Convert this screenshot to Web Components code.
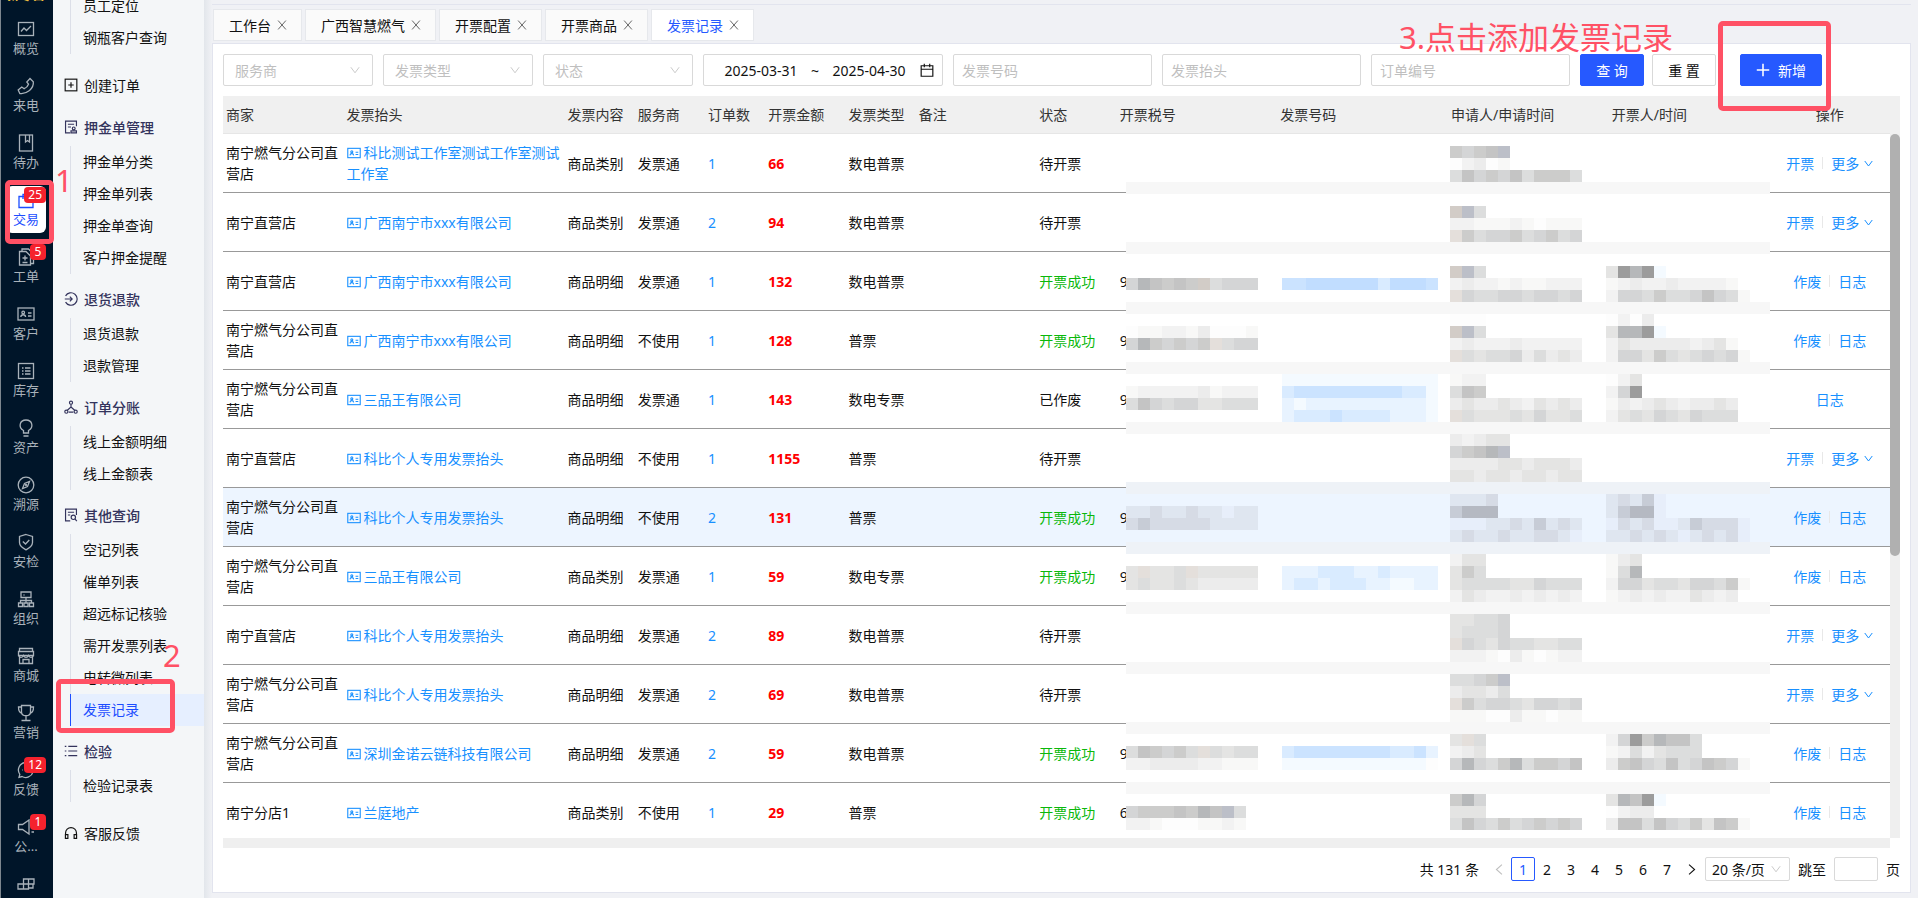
<!DOCTYPE html>
<html lang="zh-CN">
<head>
<meta charset="utf-8">
<title>发票记录</title>
<style>
  html, body { height: 100%; }
  body {
    margin: 0;
    font: 14px/21px "Noto Sans", "Noto Sans CJK SC", sans-serif;
    color: #111;
    background: #f0f1f5;
    overflow: hidden;
  }
</style>
</head>
<body>
<app-shell>
  <side-rail slot="rail"></side-rail>
  <side-menu slot="menu"></side-menu>
  <tab-bar></tab-bar>
  <page-panel>
    <filter-bar></filter-bar>
    <invoice-table></invoice-table>
    <page-pager></page-pager>
  </page-panel>
</app-shell>
<guide-mark style="left:5px;top:180px;width:49px;height:64px"></guide-mark>
<guide-mark style="left:56px;top:679px;width:119px;height:54px"></guide-mark>
<guide-mark style="left:1718px;top:21px;width:113px;height:90px"></guide-mark>
<guide-text style="left:55px;top:157px">1</guide-text>
<guide-text style="left:163px;top:632px">2</guide-text>
<guide-text style="left:1399px;top:14px">3.点击添加发票记录</guide-text>

<script>
const icons = {
  chart: '<rect x="1.5" y="2.5" width="15" height="13"/><path d="M4 11.5l3-3.5 2.5 2.5L14 6"/>',
  phone: '<path d="M13 1.5l3.3 3.3c.4 3.500-1.300 6.500-3.800 8.700-2.800 2.200-6.500 3.600-9.700 3L1.200 13l3.600-3 2.400 1.700c2-.8 3.500-2.400 4.300-4.500L9.800 5z"/>',
  book: '<rect x="2.500" y="1" width="13" height="16"/><path d="M8.500 1v7l2-1.500 2 1.500V1"/>',
  trade: '<path d="M2 5.500h14v11H2z"/><path d="M6 8V3.500h6V8"/>',
  order: '<path d="M5 3V1h6.500l5 5v9.500H14"/><path d="M2.500 3.500H9l4.500 4.500v9h-11z"/><path d="M8 7.500v5M5.500 10h5M5.500 14.500h5"/>',
  idcard: '<rect x="1" y="3" width="16" height="12"/><circle cx="6.200" cy="7.500" r="1.300"/><path d="M3.800 12c.3-3 4.500-3 4.800 0M11 8h3.500M11 11h3.500"/>',
  list: '<rect x="1.500" y="1.500" width="15" height="15"/><path d="M5 6h1.500M5 9h1.500M5 12h1.500M8 6h5.500M8 9h5.500M8 12h5.500"/>',
  bulb: '<path d="M6.500 14v-2.500C1 8.500 2.500 1 9 1s8 7.500 2.500 10.500V14zM6.500 17h5"/>',
  compass: '<circle cx="9" cy="9" r="7.800"/><path d="M12.500 5.500l-2 5-5 2 2-5z"/><circle cx="9" cy="9" r=".5"/>',
  shield: '<path d="M9 1.500l6.500 2v6c0 3.500-3 5.500-6.500 7.300C5.500 15 2.500 13 2.500 9.500v-6z"/><path d="M5.800 8.500L8.500 11l3.800-4"/>',
  org: '<path d="M4 2h10v5.500H4zM9 7.500V10M3.500 13v-2.500h11V13M9 10v3M1.500 13h4v3.500h-4zM7 13h4v3.500H7zM12.500 13h4v3.500h-4zM6.500 5h1"/>',
  shop: '<path d="M2.500 1.500h13v3h-13zM1.500 4.500h15v4h-15zM2.500 8.500v8h13v-8M6 16.500v-4h6v4"/><path d="M1.500 8.500c1.500 2.500 3.500 2.500 5 0 1 2.500 4 2.500 5 0 1.500 2.500 3.500 2.500 5 0"/>',
  cup: '<path d="M4.500 1.500h9V8c0 5-9 5-9 0zM4.500 3h-3c0 3.500.500 5.500 3 6M13.500 3h3c0 3.500-.5 5.500-3 6M9 12v4.500M4.500 16.500h9"/>',
  chat: '<path d="M9 1.500a7.500 7.500 0 1 1-4 14l-3 .8.800-3A7.500 7.500 0 0 1 9 1.500z"/><path d="M5.500 9h.5M9 9h.5M12.500 9h.5"/>',
  horn: '<path d="M1.500 6.500h4L12 2v14l-6.500-4.500h-4zM14.500 14h2.500"/>',
  blocks: '<path d="M6.500 4h10.500v5H6.500zM1 9h10.500v5H1zM11.500 4v5h4.500v4h-4.500M6.500 9v5"/>',
  plusbox: '<rect x="1.500" y="1.500" width="15" height="15"/><path d="M9 5.500v7M5.500 9h7"/>',
  deposit: '<path d="M8 16.500H2v-15h14V8M5 5.500h8M5 9h4"/><circle cx="12.500" cy="10.800" r="1.800"/><path d="M9 16.500v-2.500h7v2.500z"/>',
  refund: '<path d="M2 5a8 8 0 1 1 0 8M1 9h9M7.500 6l3 3-3 3"/>',
  share: '<circle cx="9" cy="3.500" r="2"/><circle cx="3" cy="15" r="2"/><circle cx="15" cy="15" r="2"/><path d="M9 5.500V9l-5 4.500M9 9l5 4.500M6 15.500h6"/>',
  query: '<path d="M8 16.500H2v-15h14V9M5 5.500h8M5 9h3"/><circle cx="12" cy="12" r="2.800"/><path d="M14 14l2.500 3"/>',
  lines: '<path d="M1 3h2M1 9h2M1 15h2M5.500 3H17M5.500 9H17M5.500 15H17"/>',
  headset: '<path d="M2 11V9a7 7 0 0 1 14 0v2M1.800 11H5v5H1.800zM13 11h3.200v5H13z"/>',
  down: '<path d="M1.500 4L9 14l7.500-10"/>',
  left: '<path d="M13 1L4 9l9 8"/>',
  right: '<path d="M5 1l9 8-9 8"/>',
  close: '<path d="M2 1l14 16M16 1L2 17"/>',
  plus: '<path d="M9 1v16M1 9h16"/>',
  calendar: '<path d="M1.500 3.500h15v13.500h-15zM1.500 8h15M5.500 1v4.500M12.500 1v4.500"/>'
}

// every element renders once into an open shadow root
class BaseElement extends HTMLElement {
  constructor() {
    super()
    this.attachShadow({ mode: 'open' })
  }

  connectedCallback() {
    this.shadowRoot.innerHTML = `<style>* { box-sizing: border-box } ${this.styles()}</style>${this.render()}`
  }

  styles() {
    return ''
  }

  render() {
    return '<slot></slot>'
  }
}

class UiIcon extends BaseElement {
  styles() {
    return `
      :host { display: inline-block; width: 14px; height: 14px; flex: none; }
      svg { display: block; width: 100%; height: 100%; fill: none; stroke: currentColor; stroke-width: var(--stroke, 1.5); overflow: visible; }
    `
  }

  render() {
    return `<svg viewBox="0 0 18 18" aria-hidden="true">${icons[this.getAttribute('name')]}</svg>`
  }
}
customElements.define('ui-icon', UiIcon)

class AppShell extends BaseElement {
  styles() {
    return `
      :host { display: flex; height: 100vh; }
      main {
        flex: 1; min-width: 0; display: flex; flex-direction: column;
        padding: 4px 7px 5px 8px;
        background: linear-gradient(to right, #e2e6eb, #f0f1f5 8px);
      }
    `
  }

  render() {
    return '<slot name="rail"></slot><slot name="menu"></slot><main><slot></slot></main>'
  }
}
customElements.define('app-shell', AppShell)

const railItems = [
  ['chart', '概览'], ['phone', '来电'], ['book', '待办'], ['trade', '交易', 25],
  ['order', '工单', 5], ['idcard', '客户'], ['list', '库存'], ['bulb', '资产'],
  ['compass', '溯源'], ['shield', '安检'], ['org', '组织'], ['shop', '商城'],
  ['cup', '营销'], ['chat', '反馈', 12], ['horn', '公...', 1], ['blocks', '']
]

class SideRail extends BaseElement {
  styles() {
    return `
      :host { display: block; flex: none; width: 53px; overflow: hidden; background: #001529; border-left: 1px solid #7d868e; box-sizing: border-box; }
      .brand { height: 29px; margin-top: -14px; line-height: 16px; font-size: 13px; font-weight: bold; color: #f0c040; padding-left: 5px; white-space: nowrap; }
      a {
        position: relative; display: flex; flex-direction: column; align-items: center;
        width: 40px; height: 47px; margin: 0 0 10px 5px; padding-top: 5px;
        font-size: 13px; line-height: 20px; color: #a9b2ba; text-decoration: none;
      }
      a.active { background: #fff; border-radius: 6px; color: #1c4dff; }
      ui-icon { width: 18px; height: 18px; --stroke: 1.3; }
      b {
        position: absolute; top: 1px; right: 0; min-width: 16px; height: 16px; padding: 0 4px;
        border-radius: 4px; background: #f5222d; color: #fff; font-size: 12px; font-weight: normal; line-height: 15px; text-align: center;
      }
    `
  }

  render() {
    return '<div class="brand">新零售</div>' + railItems.map(([icon, label, count]) => `
      <a href="#" class="${label === '交易' ? 'active' : ''}"><ui-icon name="${icon}"></ui-icon>${label ? `<span>${label}</span>` : ''}${count ? `<b>${count}</b>` : ''}</a>
    `).join('')
  }
}
customElements.define('side-rail', SideRail)

const menu = [
  { items: ['员工定位', '钢瓶客户查询'] },
  { icon: 'plusbox', title: '创建订单' },
  { icon: 'deposit', title: '押金单管理', items: ['押金单分类', '押金单列表', '押金单查询', '客户押金提醒'] },
  { icon: 'refund', title: '退货退款', items: ['退货退款', '退款管理'] },
  { icon: 'share', title: '订单分账', items: ['线上金额明细', '线上金额表'] },
  { icon: 'query', title: '其他查询', items: ['空记列表', '催单列表', '超远标记核验', '需开发票列表', '电转微列表', '发票记录'] },
  { icon: 'lines', title: '检验', items: ['检验记录表'] },
  { icon: 'headset', title: '客服反馈' }
]

class SideMenu extends BaseElement {
  styles() {
    return `
      :host { display: block; flex: none; width: 151px; overflow: hidden; background: #f4f6f8; }
      nav { margin-top: -10px; }
      .head { display: flex; align-items: center; gap: 6px; height: 36px; margin-top: 8px; padding: 0 0 2px 11px; font-weight: 500; color: #33335c; }
      .single { height: 32px; margin-top: 16px; font-weight: normal; color: #111; text-decoration: none; }
      ul { list-style: none; margin: 0 0 0 17px; padding: 0; }
      li a { display: block; height: 32px; line-height: 32px; padding-left: 12px; border-left: 1px solid #dcdfe8; color: #111; text-decoration: none; }
      li a.active { background: #e6efff; border-color: #1c4dff; color: #1c4dff; }
    `
  }

  render() {
    const head = group => `<ui-icon name="${group.icon}"></ui-icon>${group.title}`
    return `<nav>${menu.map(group => {
      if (!group.items) return `<a href="#" class="head single">${head(group)}</a>`
      return `
        ${group.title ? `<div class="head">${head(group)}</div>` : ''}
        <ul>${group.items.map(item => `<li><a href="#" class="${item === '发票记录' ? 'active' : ''}">${item}</a></li>`).join('')}</ul>
      `
    }).join('')}</nav>`
  }
}
customElements.define('side-menu', SideMenu)

class TabBar extends BaseElement {
  styles() {
    return `
      :host { display: flex; flex: none; gap: 3px; height: 39px; padding: 4px 0 2px 1px; border-top: 1px solid #e2e4ee; box-sizing: border-box; }
      .tab { display: flex; align-items: center; gap: 6px; height: 32px; padding: 0 14px 0 15px; border: 1px solid #e6e8ec; background: #fafafa; }
      .tab.active { background: #fff; color: #2659ff; }
      a { color: inherit; text-decoration: none; }
      button { width: 10px; height: 10px; padding: 0; border: 0; background: none; color: #666; }
      ui-icon { width: 10px; height: 10px; display: block; --stroke: 1.8; }
    `
  }

  render() {
    return ['工作台', '广西智慧燃气', '开票配置', '开票商品', '发票记录'].map((name, i) => `
      <div class="tab ${i === 4 ? 'active' : ''}"><a href="#">${name}</a><button aria-label="关闭"><ui-icon name="close"></ui-icon></button></div>
    `).join('')
  }
}
customElements.define('tab-bar', TabBar)

class PagePanel extends BaseElement {
  styles() {
    return ':host { display: flex; flex-direction: column; flex: 1; min-height: 0; background: #fff; border: 1px solid #e2e4ee; padding: 10px 10px 0; box-sizing: border-box; }'
  }
}
customElements.define('page-panel', PagePanel)

// native select with its own chevron
class SelectBox extends BaseElement {
  styles() {
    return `
      :host { display: grid; align-items: center; width: 150px; height: 32px; color: #bfbfbf; }
      select, ui-icon { grid-area: 1 / 1; }
      select { appearance: none; width: 100%; height: 100%; padding: 0 0 0 var(--pad, 11px); border: 1px solid #d9d9d9; border-radius: 2px; background: #fff; font: inherit; color: inherit; }
      ui-icon { width: 10px; height: 10px; justify-self: end; margin-right: var(--arrow, 13px); color: #bfbfbf; pointer-events: none; }
    `
  }

  render() {
    const label = this.getAttribute('label')
    return `<select aria-label="${label}"><option>${label}</option></select><ui-icon name="down"></ui-icon>`
  }
}
customElements.define('select-box', SelectBox)

class FilterBar extends BaseElement {
  styles() {
    return `
      :host { display: flex; flex: none; gap: 10px; height: 32px; margin-bottom: 10px; }
      input { font: inherit; color: inherit; }
      input::placeholder { color: #bfbfbf; }
      .text { width: 199px; padding: 0 8px; border: 1px solid #d9d9d9; border-radius: 2px; }
      .range { display: flex; align-items: center; width: 240px; padding-left: 11px; border: 1px solid #d9d9d9; border-radius: 2px; }
      .range input { width: 92px; padding: 0; border: 0; text-align: center; }
      .range span { width: 16px; text-align: center; }
      .range ui-icon { margin-left: 5px; }
      .buttons { display: flex; gap: 8px; }
      button { height: 32px; min-width: 64px; padding: 0 15px; border: 1px solid #d9d9d9; border-radius: 2px; background: #fff; font: inherit; color: inherit; white-space: nowrap; }
      button.primary { background: #2659ff; border-color: #2659ff; color: #fff; }
      .add { display: flex; align-items: center; gap: 8px; margin-left: 14px; }
      .add ui-icon { --stroke: 2; }
    `
  }

  render() {
    return `
      <select-box label="服务商"></select-box>
      <select-box label="发票类型"></select-box>
      <select-box label="状态"></select-box>
      <div class="range">
        <input aria-label="开始日期" value="2025-03-31"><span>~</span><input aria-label="结束日期" value="2025-04-30">
        <ui-icon name="calendar"></ui-icon>
      </div>
      <input class="text" aria-label="发票号码" placeholder="发票号码">
      <input class="text" aria-label="发票抬头" placeholder="发票抬头">
      <input class="text" aria-label="订单编号" placeholder="订单编号">
      <div class="buttons"><button class="primary">查 询</button><button>重 置</button></div>
      <button class="primary add"><ui-icon name="plus"></ui-icon>新增</button>
    `
  }
}
customElements.define('filter-bar', FilterBar)

// 12px cells that cover personal data, five lines to a band; the fifth is the strip over the row border
const shades = {
  0: '#fdfdfd', 1: '#f8f8f7', 2: '#f2f2f2', 3: '#ececec', 4: '#e4e4e3', 5: '#dcdddd', 6: '#d4d5d6', 7: '#cccccb', 8: '#c4c4c4', 9: '#b6b8ba',
  a: '#9c9c9c', w: '#e4dfdb', v: '#d2ccc7', x: '#bcbfc8', b: '#f4faff', c: '#e8f3ff', d: '#d9ebff', e: '#cbe3ff', f: '#c1ddff',
  H: '#e7eefa', I: '#dfe6f0', J: '#d6dbe5', K: '#c7ccd6', L: '#b5b9c2'
}
const TAX = 0, NUM = 13, ASK = 27, OPEN = 40
const bands = [
  [[ASK, 1, '7678x'], [ASK, 2, '02301'], [ASK, 3, '58676857775']],
  [[ASK, 1, 'vx5'], [ASK, 2, '22111210111'], [ASK, 3, 'w7566756756']],
  [[TAX, 2, '698787v5666'], [NUM, 2, 'eeffffffdfffe'], [ASK, 1, 'vx5'], [OPEN, 1, '4a9ab'],
    [ASK, 2, '23221211222'], [OPEN, 2, '12322322221'], [ASK, 3, 'w6556656656'], [OPEN, 3, '266575568651']],
  [[TAX, 1, '01122130001'], [TAX, 2, '6976767w566'], [ASK, 0, '000'], [ASK, 1, 'vx5'], [OPEN, 0, '0203'], [OPEN, 1, '499ab'],
    [ASK, 2, '23222322222'], [OPEN, 2, '24333332341'], [ASK, 3, 'w5455635343'], [OPEN, 3, '266475456561']],
  [[TAX, 1, '12222231222'], [TAX, 2, '58656644555'], [NUM, 0, 'bbbbbbbbbbbbb'], [NUM, 1, 'deeeeeeeeeddb'], [NUM, 2, 'cbccccccccccb'], [NUM, 3, 'cdddeddddcccb'],
    [ASK, 0, '122'], [ASK, 1, '587'], [ASK, 2, '34334324343'], [ASK, 3, 'w5444546445'], [OPEN, 0, '024'], [OPEN, 1, '26a'], [OPEN, 2, '13234323343'], [OPEN, 3, '24546546555']],
  [[ASK, 0, '32344'], [ASK, 1, '6789x'], [ASK, 2, '33334434443'], [ASK, 3, '44344344344']],
  [[TAX, 1, 'IIJIIJIIHII'], [TAX, 2, 'JKJJJJJIIII'], [ASK, 0, 'IIIJ'], [ASK, 1, 'KLLL'], [ASK, 2, 'HHHIIJIKIJI'], [ASK, 3, 'IJIIJIIJJIH'],
    [OPEN, 0, 'IJIKH'], [OPEN, 1, 'IKLLH'], [OPEN, 2, 'HJIJHHIKJJJH'], [OPEN, 3, 'IIJIJIHIJIJH']],
  [[TAX, 1, '4w445w44444'], [TAX, 2, '45445433333'], [NUM, 1, 'cccdddccdcccc'], [NUM, 2, 'cddcdddccbbcc'],
    [ASK, 0, '244'], [ASK, 1, '475'], [ASK, 2, '45555446555'], [ASK, 3, '24322323232'], [OPEN, 0, '134'], [OPEN, 1, '159'], [OPEN, 2, '266455466571'], [OPEN, 3, '12323224323']],
  [[ASK, 0, '44556'], [ASK, 1, '45556'], [ASK, 2, 'w6546554455'], [ASK, 3, '22210310122']],
  [[ASK, 0, '5567x'], [ASK, 1, '34435'], [ASK, 2, 'w7566546656'], [ASK, 3, '11100311011']],
  [[TAX, 1, '587675w5455'], [TAX, 2, '22333322111'], [NUM, 1, 'deeeeeeeeddec'], [NUM, 2, 'bbbbbbbbbbbb0'],
    [ASK, 0, '4w5'], [ASK, 1, '234'], [ASK, 2, '69657957768'], [OPEN, 0, '26a79885'], [OPEN, 1, '12524555'], [OPEN, 2, '378658568761']],
  [[TAX, 1, '67778798x5'], [TAX, 2, '2210001121'], [ASK, 0, '796'], [ASK, 1, '444'], [ASK, 2, '58657567676'], [OPEN, 0, '498ab'], [OPEN, 1, '0233'], [OPEN, 2, '388586574871']]
]

class MosaicMask extends BaseElement {
  styles() {
    return `
      :host { display: block; background: #fff; }
      svg { display: block; }
    `
  }

  render() {
    const rect = (x, y, w, fill) => `<rect x="${x}" y="${y}" width="${w}" height="12" fill="${fill}"/>`
    let cells = '<rect y="360" width="644" height="48" fill="#edf5ff"/>'
    bands.forEach((band, k) => {
      band.forEach(([col, line, text]) => {
        [...text].forEach((key, i) => { cells += rect((col + i) * 12, k * 60 + line * 12, 12, shades[key]) })
      })
      if (k < 11) cells += rect(0, k * 60 + 48, 644, k === 5 || k === 6 ? '#eef2f7' : '#f7f7f7')
    })
    return `<svg width="644" height="704" shape-rendering="crispEdges" aria-hidden="true">${cells}</svg>`
  }
}
customElements.define('mosaic-mask', MosaicMask)

const columns = [
  ['商家', 120], ['发票抬头', 220], ['发票内容', 70], ['服务商', 70], ['订单数', 60], ['开票金额', 80], ['发票类型', 70],
  ['备注', 120], ['状态', 80], ['开票税号', 160], ['发票号码', 170], ['申请人/申请时间', 160], ['开票人/时间', 160], ['操作', 120]
]

const A = '南宁燃气分公司直营店'
const B = '南宁直营店'
const rows = [
  [A, '科比测试工作室测试工作室测试工作室', '商品类别', '发票通', 1, 66, '数电普票', '待开票', ''],
  [B, '广西南宁市xxx有限公司', '商品类别', '发票通', 2, 94, '数电普票', '待开票', ''],
  [B, '广西南宁市xxx有限公司', '商品明细', '发票通', 1, 132, '数电普票', '开票成功', '9'],
  [A, '广西南宁市xxx有限公司', '商品明细', '不使用', 1, 128, '普票', '开票成功', '9'],
  [A, '三品王有限公司', '商品明细', '发票通', 1, 143, '数电专票', '已作废', '9'],
  [B, '科比个人专用发票抬头', '商品明细', '不使用', 1, 1155, '普票', '待开票', ''],
  [A, '科比个人专用发票抬头', '商品明细', '不使用', 2, 131, '普票', '开票成功', '9'],
  [A, '三品王有限公司', '商品类别', '发票通', 1, 59, '数电专票', '开票成功', '9'],
  [B, '科比个人专用发票抬头', '商品明细', '发票通', 2, 89, '数电普票', '待开票', ''],
  [A, '科比个人专用发票抬头', '商品明细', '发票通', 2, 69, '数电普票', '待开票', ''],
  [A, '深圳金诺云链科技有限公司', '商品明细', '发票通', 2, 59, '数电普票', '开票成功', '9'],
  ['南宁分店1', '兰庭地产', '商品类别', '不使用', 1, 29, '普票', '开票成功', '6']
]

const actions = {
  '待开票': '<a href="#">开票</a><i></i><a href="#">更多<ui-icon name="down"></ui-icon></a>',
  '开票成功': '<a href="#">作废</a><i></i><a href="#">日志</a>',
  '已作废': '<a href="#">日志</a>'
}

class InvoiceTable extends BaseElement {
  styles() {
    return `
      :host { position: relative; display: grid; grid-template-columns: 1fr 10px; grid-template-rows: minmax(0, 1fr) 10px; flex: 1; min-height: 0; }
      .body { overflow: hidden; }
      table { width: 100%; table-layout: fixed; border-collapse: separate; border-spacing: 0; }
      th, td { padding: 0 3px; text-align: left; }
      th { height: 38px; background: #f0f0f0; border-bottom: 1px solid #e6e6e6; font-weight: normal; color: #333; white-space: nowrap; }
      td { height: 59px; border-bottom: 1px solid #999; }
      tr.hover td { background: #edf5ff; }
      th:last-child, td:last-child { text-align: center; }
      a { color: #1890ff; text-decoration: none; }
      .amount { color: #f00; font-weight: bold; }
      .ok { color: #0ab80a; }
      .title ui-icon { margin-right: 3px; vertical-align: -2px; --stroke: 1.4; }
      .ops { display: flex; justify-content: center; align-items: center; }
      .ops a { display: flex; align-items: center; gap: 5px; }
      .ops i { width: 1px; height: 12px; margin: 0 8px; background: #e8e8e8; }
      .ops ui-icon { width: 9px; height: 9px; --stroke: 2; }
      .scroll { padding-top: 38px; background: linear-gradient(#f0f0f0 38px, #efefef 38px); }
      .thumb { height: 60%; border-radius: 5px; background: #b0b0b0; }
      .hscroll { background: #efefef; }
      mosaic-mask { position: absolute; top: 38px; bottom: 10px; right: 130px; overflow: hidden; }
    `
  }

  render() {
    return `
      <div class="body">
        <table>
          <colgroup>${columns.map(([, width]) => `<col style="width:${width}px">`).join('')}</colgroup>
          <thead><tr>${columns.map(([name]) => `<th>${name}</th>`).join('')}</tr></thead>
          <tbody>${rows.map(([shop, title, kind, vendor, count, amount, type, state, tax], i) => `
            <tr class="${i === 6 ? 'hover' : ''}">
              <td>${shop}</td>
              <td class="title"><a href="#"><ui-icon name="idcard"></ui-icon>${title}</a></td>
              <td>${kind}</td><td>${vendor}</td>
              <td><a href="#">${count}</a></td>
              <td class="amount">${amount}</td>
              <td>${type}</td><td></td>
              <td class="${state === '开票成功' ? 'ok' : ''}">${state}</td>
              <td>${tax}</td><td></td><td></td><td></td>
              <td><div class="ops">${actions[state]}</div></td>
            </tr>`).join('')}
          </tbody>
        </table>
      </div>
      <div class="scroll"><div class="thumb"></div></div>
      <div class="hscroll"></div>
      <mosaic-mask></mosaic-mask>
    `
  }
}
customElements.define('invoice-table', InvoiceTable)

class PagePager extends BaseElement {
  styles() {
    return `
      :host { display: flex; flex: none; justify-content: flex-end; align-items: center; height: 44px; padding-bottom: 2px; gap: 8px; box-sizing: border-box; }
      .pages { display: flex; }
      button { display: grid; place-items: center; width: 24px; height: 24px; padding: 0; border: 1px solid transparent; border-radius: 2px; background: none; font: inherit; color: inherit; }
      button.active { border-color: #2659ff; color: #2659ff; }
      button:disabled { color: #bfbfbf; }
      ui-icon { width: 11px; height: 11px; --stroke: 1.8; }
      select-box { width: 85px; height: 24px; margin-left: -6px; color: #111; --pad: 6px; --arrow: 9px; }
      label { display: flex; align-items: center; gap: 8px; }
      input { width: 44px; height: 24px; border: 1px solid #d9d9d9; border-radius: 2px; font: inherit; }
    `
  }

  render() {
    return `
      <span>共 131 条</span>
      <div class="pages">
        <button disabled aria-label="上一页"><ui-icon name="left"></ui-icon></button>
        ${[1, 2, 3, 4, 5, 6, 7].map(n => `<button class="${n === 1 ? 'active' : ''}">${n}</button>`).join('')}
        <button aria-label="下一页"><ui-icon name="right"></ui-icon></button>
      </div>
      <select-box label="20 条/页"></select-box>
      <label>跳至<input>页</label>
    `
  }
}
customElements.define('page-pager', PagePager)

class GuideMark extends BaseElement {
  styles() {
    return ':host { position: absolute; box-sizing: border-box; border: 5px solid #ff5165; border-radius: 5px; pointer-events: none; }'
  }
}
customElements.define('guide-mark', GuideMark)

class GuideText extends BaseElement {
  styles() {
    return ':host { position: absolute; font-size: 31px; line-height: 46px; color: #ff5165; white-space: nowrap; pointer-events: none; }'
  }
}
customElements.define('guide-text', GuideText)
</script>
</body>
</html>
